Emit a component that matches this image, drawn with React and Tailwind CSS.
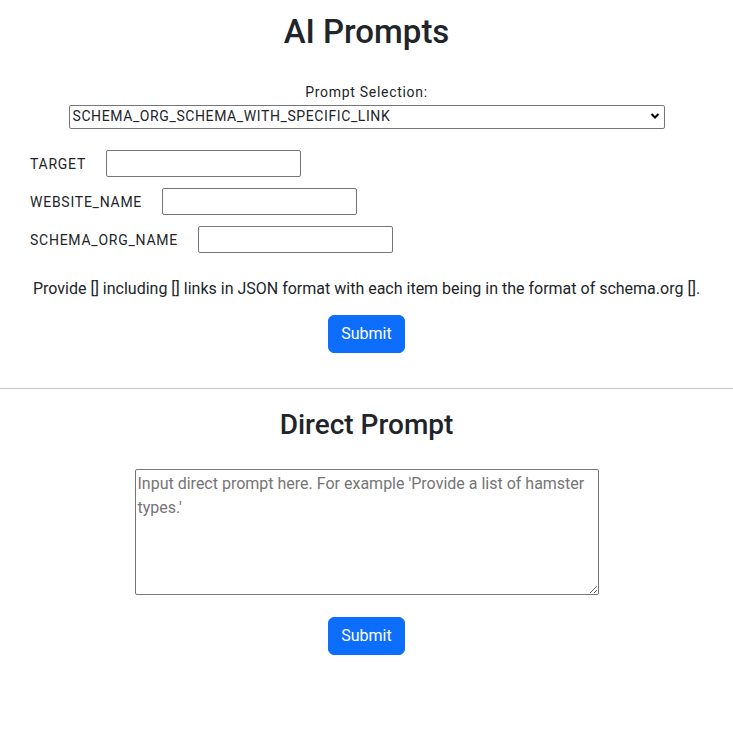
import { useState } from "react";

const FIELDS = ["TARGET", "WEBSITE_NAME", "SCHEMA_ORG_NAME"];

export default function App() {
  const [values, setValues] = useState({});
  const [direct, setDirect] = useState("");

  return (
    <div
      className="min-h-screen bg-white text-[#212529] text-center"
      style={{ fontFamily: 'Roboto, "Liberation Sans", sans-serif' }}
    >
      {/* ===== AI PROMPTS ===== */}
      <h1 className="pt-[12px] text-[33px] leading-[40px] font-medium">AI Prompts</h1>

      <div className="mt-[30px] text-[14px] leading-[21px] tracking-[0.7px]">Prompt Selection:</div>
      <div className="mt-[1px] flex justify-center">
        <div className="relative w-[596px]">
          <select className="w-full h-[24px] appearance-none border border-[#767676] rounded-[2px] pl-[3px] text-[14px] leading-[21px] tracking-[0.6px] bg-white outline-none">
            <option>SCHEMA_ORG_SCHEMA_WITH_SPECIFIC_LINK</option>
          </select>
          <svg
            className="absolute right-[5px] top-[8px] pointer-events-none"
            width="10"
            height="8"
            viewBox="0 0 10 8"
          >
            <path d="M1.5 2 L5 5.5 L8.5 2" fill="none" stroke="#000" strokeWidth="2" />
          </svg>
        </div>
      </div>

      {/* FIELDS */}
      <div className="mt-[21px] flex flex-col gap-[11px] pl-[30px] text-left">
        {FIELDS.map((f) => (
          <div key={f} className="flex items-center h-[27px]">
            <label className="pt-[2px] text-[14px] tracking-[0.75px]">{f}</label>
            <input
              value={values[f] || ""}
              onChange={(e) => setValues({ ...values, [f]: e.target.value })}
              className="ml-[20px] w-[195px] h-[27px] border border-[#767676] rounded-[2px] px-[2px] text-[14px] outline-none"
            />
          </div>
        ))}
      </div>

      <p className="mt-[24px] text-[16px] leading-6">
        Provide [] including [] links in JSON format with each item being in the format of schema.org [].
      </p>

      <button className="mt-[14px] px-[12px] py-[6px] border border-[#0d6efd] bg-[#0d6efd] text-white text-[16px] leading-6 rounded-[6px]">
        Submit
      </button>

      <hr className="mt-[35px] border-0 border-t border-[#c8c8c8]" />

      {/* ===== DIRECT PROMPT ===== */}
      <h2 className="mt-[19px] text-[28px] leading-[34px] font-medium">Direct Prompt</h2>

      <div className="mt-[27px] flex justify-center">
        <textarea
          value={direct}
          onChange={(e) => setDirect(e.target.value)}
          placeholder="Input direct prompt here. For example 'Provide a list of hamster types.'"
          className="block w-[464px] h-[126px] border border-[#767676] rounded-[2px] p-[2px] text-[16px] leading-6 placeholder:text-[#757575] outline-none"
        />
      </div>

      <button className="mt-[22px] px-[12px] py-[6px] border border-[#0d6efd] bg-[#0d6efd] text-white text-[16px] leading-6 rounded-[6px]">
        Submit
      </button>
    </div>
  );
}
